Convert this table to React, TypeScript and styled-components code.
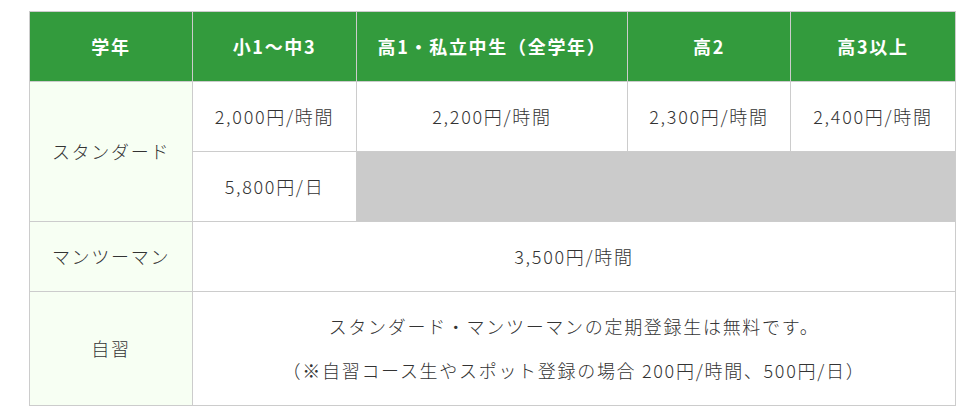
import React from 'react';
import styled, { createGlobalStyle } from 'styled-components';

const GlobalStyle = createGlobalStyle`
    html, body {
        margin: 0;
        padding: 0;
        background: #fff;
    }
    body {
        font-family: "Noto Sans CJK JP", "Noto Sans", sans-serif;
        color: #333;
    }
`;

const Wrapper = styled.div`
    padding: 11px 0 0 29px;
`;

const Table = styled.table`
    width: 926px;
    border-collapse: collapse;
    table-layout: fixed;
    font-size: 18px;
    letter-spacing: 1.7px;
    line-height: 1.5;
`;

const Row = styled.tr<{ $h?: number }>`
    height: ${(p) => p.$h || 70}px;
`;

const Th = styled.th`
    background-color: #339b3d;
    color: #fff;
    font-weight: 700;
    border: 1px solid #ccc;
    text-align: center;
    padding: 0;
`;

const Td = styled.td<{ $variant?: 'label' | 'blank' }>`
    border: 1px solid #ccc;
    text-align: center;
    padding: 0;
    font-weight: 300;
    background-color: ${(p) =>
        p.$variant === 'label' ? '#f7fff3' : p.$variant === 'blank' ? '#cbcbcb' : '#fff'};
`;

const Note = styled.p`
    margin: 0;
    & + & {
        margin-top: 17px;
    }
`;

const headers = ['学年', '小1〜中3', '高1・私立中生（全学年）', '高2', '高3以上'];
const widths = [163, 164, 271, 163, 165];

const App: React.FunctionComponent = () => {
    return (
        <Wrapper>
            <GlobalStyle />
            <Table>
                <colgroup>
                    {widths.map((w, i) => (
                        <col key={i} style={{ width: w }} />
                    ))}
                </colgroup>
                <thead>
                    <Row>
                        {headers.map((h) => (
                            <Th key={h}>{h}</Th>
                        ))}
                    </Row>
                </thead>
                <tbody>
                    <Row>
                        <Td $variant="label" rowSpan={2}>スタンダード</Td>
                        <Td>2,000円/時間</Td>
                        <Td>2,200円/時間</Td>
                        <Td>2,300円/時間</Td>
                        <Td>2,400円/時間</Td>
                    </Row>
                    <Row>
                        <Td>5,800円/日</Td>
                        <Td $variant="blank" colSpan={3} />
                    </Row>
                    <Row>
                        <Td $variant="label">マンツーマン</Td>
                        <Td colSpan={4}>3,500円/時間</Td>
                    </Row>
                    <Row $h={114}>
                        <Td $variant="label">自習</Td>
                        <Td colSpan={4}>
                            <Note>スタンダード・マンツーマンの定期登録生は無料です。</Note>
                            <Note>（※自習コース生やスポット登録の場合 200円/時間、500円/日）</Note>
                        </Td>
                    </Row>
                </tbody>
            </Table>
        </Wrapper>
    );
};

export default App;
